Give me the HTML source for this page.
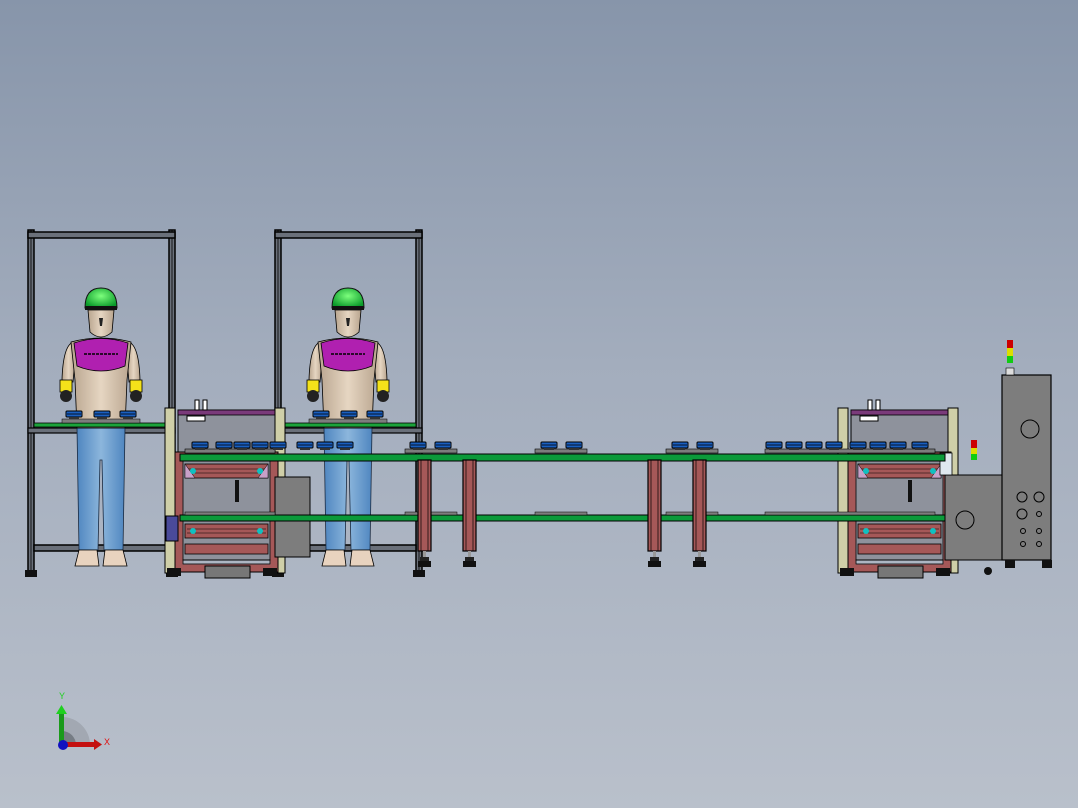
<!DOCTYPE html>
<html><head><meta charset="utf-8"><style>
html,body{margin:0;padding:0;width:1078px;height:808px;overflow:hidden}
body{background:linear-gradient(#8795aa 0%,#a3adbd 45%,#b9c0cb 100%)}
svg{position:absolute;left:0;top:0}
.t{font-family:"Liberation Sans",sans-serif;font-size:9px}
</style></head><body>
<svg width="1078" height="808" viewBox="0 0 1078 808" xmlns="http://www.w3.org/2000/svg">
<defs>
<linearGradient id="jean" x1="0" x2="1"><stop offset="0" stop-color="#4f86c0"/><stop offset=".5" stop-color="#8cb6dc"/><stop offset="1" stop-color="#4f86c0"/></linearGradient>
<radialGradient id="helm" cx=".5" cy=".4" r=".6"><stop offset="0" stop-color="#7dff7d"/><stop offset="1" stop-color="#0a9a2a"/></radialGradient>
<linearGradient id="skin" x1="0" x2="1"><stop offset="0" stop-color="#b8a48e"/><stop offset=".5" stop-color="#e6d6c2"/><stop offset="1" stop-color="#b8a48e"/></linearGradient>

<g id="frame">
 <rect x="0" y="0" width="6" height="342" fill="#6a707a" stroke="#000" stroke-width="1.5"/>
 <line x1="3" y1="0" x2="3" y2="342" stroke="#000" stroke-width=".8"/>
 <rect x="141" y="0" width="6" height="342" fill="#6a707a" stroke="#000" stroke-width="1.5"/>
 <line x1="144" y1="0" x2="144" y2="342" stroke="#000" stroke-width=".8"/>
 <rect x="0" y="2" width="147" height="6" fill="#6a707a" stroke="#000" stroke-width="1.5"/>
 <rect x="0" y="198" width="147" height="5" fill="#6a707a" stroke="#000" stroke-width="1.2"/>
 <rect x="6" y="315" width="135" height="6" fill="#6a707a" stroke="#000" stroke-width="1.5"/>
 <rect x="-3" y="340" width="12" height="7" fill="#111"/>
 <rect x="138" y="340" width="12" height="7" fill="#111"/>
</g>

<g id="person">
 <path d="M-24 198 L24 198 L22 320 L3 320 L1 230 L-1 230 L-3 320 L-22 320 Z" fill="url(#jean)" stroke="#1a2a40" stroke-width=".8"/>
 <path d="M-22 320 L-4 320 L-2 336 L-26 336 Z" fill="#e8d3bf" stroke="#000" stroke-width=".8"/>
 <path d="M4 320 L22 320 L26 336 L2 336 Z" fill="#e8d3bf" stroke="#000" stroke-width=".8"/>
 <path d="M-28 112 Q-38 116 -39 150 L-28 152 L-26 130 Z" fill="url(#skin)" stroke="#000" stroke-width=".8"/>
 <path d="M28 112 Q38 116 39 150 L28 152 L26 130 Z" fill="url(#skin)" stroke="#000" stroke-width=".8"/>
 <rect x="-41" y="150" width="12" height="12" fill="#f4e21a" stroke="#000" stroke-width=".8"/>
 <rect x="29" y="150" width="12" height="12" fill="#f4e21a" stroke="#000" stroke-width=".8"/>
 <circle cx="-35" cy="166" r="6" fill="#222"/>
 <circle cx="35" cy="166" r="6" fill="#222"/>
 <path d="M-30 112 Q0 104 30 112 L26 150 L24 198 L-24 198 L-26 150 Z" fill="url(#skin)" stroke="#000" stroke-width=".8"/>
 <path d="M-27 113 Q0 104 27 113 L24 136 Q0 146 -24 136 Z" fill="#b020b0" stroke="#000" stroke-width=".8"/>
 <line x1="-17" y1="124" x2="17" y2="124" stroke="#000" stroke-width="1.5" stroke-dasharray="3 1"/>
 <path d="M-13 80 L13 80 L11 102 Q0 112 -11 102 Z" fill="url(#skin)" stroke="#000" stroke-width=".8"/>
 <path d="M-2 88 L2 88 L1 96 L-1 96 Z" fill="#222"/>
 <path d="M-16 78 Q-16 58 0 58 Q16 58 16 78 Z" fill="url(#helm)" stroke="#111" stroke-width="1"/>
 <rect x="-16" y="76" width="32" height="4" fill="#111"/>
</g>

<g id="puck">
 <rect x="0" y="0" width="16" height="6" rx="1" fill="#1a5fc0" stroke="#000" stroke-width="1"/>
 <line x1="1" y1="3" x2="15" y2="3" stroke="#000" stroke-width=".8"/>
 <rect x="3" y="6" width="10" height="2" fill="#333"/>
</g>

<g id="leg">
 <rect x="0" y="0" width="13" height="91" fill="#a55858" stroke="#000" stroke-width="1.2"/>
 <line x1="3" y1="0" x2="3" y2="91" stroke="#000" stroke-width=".7"/>
 <line x1="10" y1="0" x2="10" y2="91" stroke="#000" stroke-width=".7"/>
 <rect x="5" y="91" width="3" height="6" fill="#999"/>
 <rect x="2" y="97" width="9" height="4" fill="#222"/>
 <rect x="0" y="101" width="13" height="6" fill="#111"/>
</g>

<g id="machine">
 <rect x="0" y="0" width="10" height="165" fill="#cfcfa8" stroke="#000" stroke-width="1"/>
 <rect x="13" y="2" width="97" height="150" fill="#8e929c" stroke="#000" stroke-width="1"/>
 <rect x="13" y="2" width="97" height="5" fill="#7a3a7a" stroke="#000" stroke-width=".8"/>
 <rect x="110" y="0" width="10" height="165" fill="#cfcfa8" stroke="#000" stroke-width="1"/>
 <rect x="30" y="-8" width="4" height="10" fill="#fff" stroke="#000"/>
 <rect x="38" y="-8" width="4" height="10" fill="#fff" stroke="#000"/>
 <rect x="22" y="8" width="18" height="5" fill="#fff" stroke="#000"/>
 <rect x="14" y="48" width="95" height="112" fill="none" stroke="#a55858" stroke-width="7"/>
 <rect x="10" y="44" width="103" height="120" fill="none" stroke="#000" stroke-width="1"/>
 <rect x="18" y="52" width="87" height="104" fill="none" stroke="#000" stroke-width=".8"/>
 <rect x="20" y="56" width="83" height="14" fill="#a55858" stroke="#000" stroke-width=".8"/>
 <line x1="22" y1="61" x2="101" y2="61" stroke="#000" stroke-width=".6"/>
 <line x1="22" y1="65" x2="101" y2="65" stroke="#000" stroke-width=".6"/>
 <rect x="20" y="116" width="83" height="14" fill="#a55858" stroke="#000" stroke-width=".8"/>
 <line x1="22" y1="121" x2="101" y2="121" stroke="#000" stroke-width=".6"/>
 <line x1="22" y1="125" x2="101" y2="125" stroke="#000" stroke-width=".6"/>
 <rect x="20" y="136" width="83" height="10" fill="#a55858" stroke="#000" stroke-width=".8"/>
 <path d="M20 56 L30 70 L20 70 Z" fill="#c8a0c8" stroke="#000" stroke-width=".5"/>
 <path d="M103 56 L93 70 L103 70 Z" fill="#c8a0c8" stroke="#000" stroke-width=".5"/>
 <circle cx="28" cy="63" r="3" fill="#10c0c0"/>
 <circle cx="95" cy="63" r="3" fill="#10c0c0"/>
 <circle cx="28" cy="123" r="3" fill="#10c0c0"/>
 <circle cx="95" cy="123" r="3" fill="#10c0c0"/>
 <rect x="70" y="72" width="4" height="22" fill="#111"/>
 <rect x="40" y="158" width="45" height="12" fill="#777" stroke="#000" stroke-width="1"/>
 <rect x="2" y="160" width="14" height="8" fill="#111"/>
 <rect x="98" y="160" width="14" height="8" fill="#111"/>
</g>
</defs>

<use href="#frame" x="28" y="230"/>
<use href="#frame" x="275" y="230"/>
<use href="#person" x="101" y="230"/>
<use href="#person" x="348" y="230"/>

<rect x="34" y="423" width="135" height="4" fill="#1ba33a" stroke="#000" stroke-width=".8"/>
<rect x="281" y="423" width="135" height="4" fill="#1ba33a" stroke="#000" stroke-width=".8"/>
<rect x="62" y="419" width="78" height="4" fill="#7d7d7d" stroke="#000" stroke-width=".5"/>
<rect x="309" y="419" width="78" height="4" fill="#7d7d7d" stroke="#000" stroke-width=".5"/>
<use href="#puck" x="66" y="411"/><use href="#puck" x="94" y="411"/><use href="#puck" x="120" y="411"/>
<use href="#puck" x="313" y="411"/><use href="#puck" x="341" y="411"/><use href="#puck" x="367" y="411"/>

<use href="#machine" x="165" y="408"/>
<rect x="275" y="477" width="35" height="80" fill="#7d7d7d" stroke="#000" stroke-width="1"/>
<rect x="166" y="516" width="12" height="25" fill="#4a4a9a" stroke="#000"/>

<use href="#machine" x="838" y="408"/>
<rect x="945" y="475" width="58" height="85" fill="#7d7d7d" stroke="#000" stroke-width="1"/>
<circle cx="965" cy="520" r="9" fill="none" stroke="#000"/>
<rect x="940" y="453" width="12" height="22" fill="#dfe8ef" stroke="#000" stroke-width=".8"/>
<rect x="971" y="440" width="6" height="8" fill="#c00"/><rect x="971" y="448" width="6" height="6" fill="#dd0"/><rect x="971" y="454" width="6" height="6" fill="#1c1"/>
<rect x="1002" y="375" width="49" height="185" fill="#7d7d7d" stroke="#000" stroke-width="1.2"/>
<circle cx="1030" cy="429" r="9" fill="none" stroke="#000"/>
<circle cx="1022" cy="497" r="5" fill="none" stroke="#000"/><circle cx="1039" cy="497" r="5" fill="none" stroke="#000"/>
<circle cx="1022" cy="514" r="5" fill="none" stroke="#000"/><circle cx="1039" cy="514" r="2.5" fill="none" stroke="#000"/>
<circle cx="1023" cy="531" r="2.5" fill="none" stroke="#000"/><circle cx="1039" cy="531" r="2.5" fill="none" stroke="#000"/>
<circle cx="1023" cy="544" r="2.5" fill="none" stroke="#000"/><circle cx="1039" cy="544" r="2.5" fill="none" stroke="#000"/>
<rect x="1007" y="340" width="6" height="8" fill="#c00"/><rect x="1007" y="348" width="6" height="8" fill="#dd0"/><rect x="1007" y="356" width="6" height="7" fill="#1c1"/>
<rect x="1006" y="368" width="8" height="7" fill="#ddd" stroke="#000" stroke-width=".6"/>
<rect x="1005" y="560" width="10" height="8" fill="#111"/><rect x="1042" y="560" width="10" height="8" fill="#111"/>
<circle cx="988" cy="571" r="4" fill="#111"/>

<rect x="185" y="449" width="90" height="4" fill="#7d7d7d" stroke="#000" stroke-width=".6"/>
<rect x="405" y="449" width="52" height="4" fill="#7d7d7d" stroke="#000" stroke-width=".6"/>
<rect x="535" y="449" width="52" height="4" fill="#7d7d7d" stroke="#000" stroke-width=".6"/>
<rect x="666" y="449" width="52" height="4" fill="#7d7d7d" stroke="#000" stroke-width=".6"/>
<rect x="765" y="449" width="170" height="4" fill="#7d7d7d" stroke="#000" stroke-width=".6"/>
<use href="#puck" x="192" y="442"/><use href="#puck" x="216" y="442"/><use href="#puck" x="234" y="442"/><use href="#puck" x="252" y="442"/><use href="#puck" x="270" y="442"/>
<use href="#puck" x="297" y="442"/><use href="#puck" x="317" y="442"/><use href="#puck" x="337" y="442"/>
<use href="#puck" x="410" y="442"/><use href="#puck" x="435" y="442"/>
<use href="#puck" x="541" y="442"/><use href="#puck" x="566" y="442"/>
<use href="#puck" x="672" y="442"/><use href="#puck" x="697" y="442"/>
<use href="#puck" x="766" y="442"/><use href="#puck" x="786" y="442"/><use href="#puck" x="806" y="442"/><use href="#puck" x="826" y="442"/><use href="#puck" x="850" y="442"/><use href="#puck" x="870" y="442"/><use href="#puck" x="890" y="442"/><use href="#puck" x="912" y="442"/>

<rect x="180" y="454" width="765" height="7" fill="#0b9a3a" stroke="#000" stroke-width="1"/>
<rect x="180" y="515" width="765" height="6" fill="#0b9a3a" stroke="#000" stroke-width="1"/>
<rect x="185" y="512" width="90" height="3" fill="#7d7d7d" stroke="#000" stroke-width=".5"/>
<rect x="405" y="512" width="52" height="3" fill="#7d7d7d" stroke="#000" stroke-width=".5"/>
<rect x="535" y="512" width="52" height="3" fill="#7d7d7d" stroke="#000" stroke-width=".5"/>
<rect x="666" y="512" width="52" height="3" fill="#7d7d7d" stroke="#000" stroke-width=".5"/>
<rect x="765" y="512" width="170" height="3" fill="#7d7d7d" stroke="#000" stroke-width=".5"/>

<use href="#leg" x="418" y="460"/>
<use href="#leg" x="463" y="460"/>
<use href="#leg" x="648" y="460"/>
<use href="#leg" x="693" y="460"/>

<path d="M62 745 L62 717 A28 28 0 0 1 90 745 Z" fill="#9aa0a8" opacity=".7"/>
<path d="M62 745 L62 731 A14 14 0 0 1 76 745 Z" fill="#6c7078" opacity=".8"/>
<rect x="59" y="712" width="5" height="33" fill="#1a9a1a"/>
<path d="M56 714 L61.5 705 L67 714 Z" fill="#1fd01f"/>
<rect x="62" y="742" width="32" height="5" fill="#c41010"/>
<path d="M94 739 L102 744.5 L94 750 Z" fill="#c41010"/>
<circle cx="63" cy="745" r="5" fill="#1010c0"/>
<text x="59" y="699" class="t" fill="#1fd01f">Y</text>
<text x="104" y="745" class="t" fill="#e01010">X</text>
</svg>
</body></html>
